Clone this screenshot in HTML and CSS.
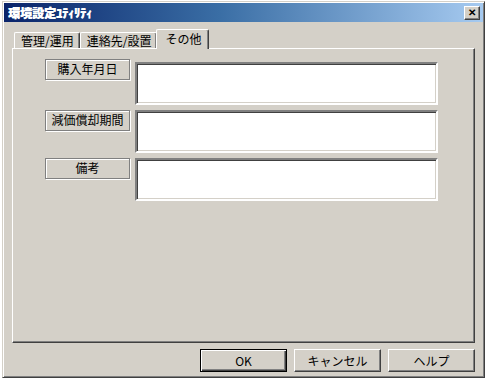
FILE: index.html
```html
<!DOCTYPE html>
<html lang="ja">
<head>
    <meta charset="UTF-8">
    <title>環境設定ユーティリティ</title>
    <link rel="stylesheet" href="styles.css">
</head>
<body>
    <div class="window">
        <div class="title-bar">
            <span class="title">環境設定ﾕﾃｨﾘﾃｨ</span>
            <button class="close-button">&#x2715;</button>
        </div>

        <div class="dialog">
            <div class="tabs">
                <div class="tab">管理/運用</div>
                <div class="tab">連絡先/設置</div>
                <div class="tab active">その他</div>
            </div>

            <div class="panel">
                <div class="field-row first">
                    <div class="field-label">購入年月日</div>
                    <div class="field-box"></div>
                </div>
                <div class="field-row">
                    <div class="field-label">減価償却期間</div>
                    <div class="field-box"></div>
                </div>
                <div class="field-row">
                    <div class="field-label">備考</div>
                    <div class="field-box"></div>
                </div>
            </div>

            <div class="button-row">
                <button class="dlg-button default">OK</button>
                <button class="dlg-button">キャンセル</button>
                <button class="dlg-button">ヘルプ</button>
            </div>
        </div>
    </div>
</body>
</html>
```

FILE: styles.css
```css
body {
    margin: 0;
    background-color: #ffffff;
    font-family: "Noto Sans CJK JP", "Liberation Sans", sans-serif;
    font-size: 12px;
    color: #000;
}
.window {
    box-sizing: border-box;
    width: 483px;
    height: 377px;
    margin: 1px 0 0 2px;
    padding: 1px;
    background-color: #d4d0c8;
    border: 1px solid;
    border-color: #d4d0c8 #404040 #404040 #d4d0c8;
    box-shadow: inset 1px 1px #ffffff, inset -1px -1px #808080;
    display: flex;
    flex-direction: column;
}
.title-bar {
    height: 19px;
    display: flex;
    align-items: center;
    justify-content: space-between;
    padding: 0 3px 0 4px;
    background: linear-gradient(to right, #0a246a, #3a6ea5 45%, #a6caf0);
}
.title {
    color: #ffffff;
    font-weight: 900;
    font-size: 12px;
    line-height: 19px;
    text-shadow: 0.4px 0 #ffffff;
}
.close-button {
    box-sizing: border-box;
    width: 16px;
    height: 14px;
    padding: 0;
    margin-top: 1px;
    font-size: 10px;
    font-weight: bold;
    line-height: 10px;
    color: #000;
    background-color: #d4d0c8;
    border: 1px solid;
    border-color: #ffffff #404040 #404040 #ffffff;
    box-shadow: inset -1px -1px #808080;
}
.dialog {
    flex: 1;
    display: flex;
    flex-direction: column;
    padding: 7px 8px 5px 8px;
}
.tabs {
    display: flex;
    align-items: flex-end;
    height: 19px;
    padding-left: 2px;
    position: relative;
    z-index: 1;
}
.tab {
    box-sizing: border-box;
    height: 16px;
    padding: 0 5px 0 6px;
    line-height: 15px;
    font-size: 12px;
    border-top: 1px solid #ffffff;
    border-left: 1px solid #ffffff;
    border-right: 1px solid #404040;
    box-shadow: inset -1px 0 #808080;
    border-radius: 2px 2px 0 0;
    background-color: #d4d0c8;
}
.tab.active {
    height: 20px;
    margin: 0 -2px -1px -1px;
    padding: 0 7px 0 8px;
    line-height: 17px;
}
.panel {
    box-sizing: border-box;
    height: 295px;
    padding: 13px 0 0 32px;
    border: 1px solid;
    border-color: #ffffff #404040 #404040 #ffffff;
    box-shadow: inset -1px -1px #808080;
    display: flex;
    flex-direction: column;
    gap: 5px;
}
.field-row {
    display: flex;
    align-items: flex-start;
    gap: 5px;
}
.field-label {
    box-sizing: border-box;
    width: 85px;
    height: 21px;
    line-height: 17px;
    text-align: center;
    border: 1px solid #808080;
    box-shadow: inset 1px 1px #ffffff, 1px 1px #ffffff;
}
.field-row.first .field-label {
    margin-top: -3px;
}
.field-box {
    box-sizing: border-box;
    width: 303px;
    height: 43px;
    background-color: #ffffff;
    border: 2px solid;
    border-color: #808080 #ffffff #ffffff #808080;
    box-shadow: inset 1px 1px #404040, inset -1px -1px #d4d0c8;
}
.button-row {
    display: flex;
    justify-content: flex-end;
    gap: 7px;
    margin-top: 6px;
}
.dlg-button {
    box-sizing: border-box;
    width: 87px;
    height: 23px;
    padding: 0;
    font-family: inherit;
    font-size: 12px;
    background-color: #d4d0c8;
    border: 1px solid;
    border-color: #ffffff #404040 #404040 #ffffff;
    box-shadow: inset -1px -1px #808080;
}
.dlg-button.default {
    border: 1px solid #000000;
    box-shadow: inset 1px 1px #ffffff, inset -1px -1px #404040, inset -2px -2px #808080;
}
```
